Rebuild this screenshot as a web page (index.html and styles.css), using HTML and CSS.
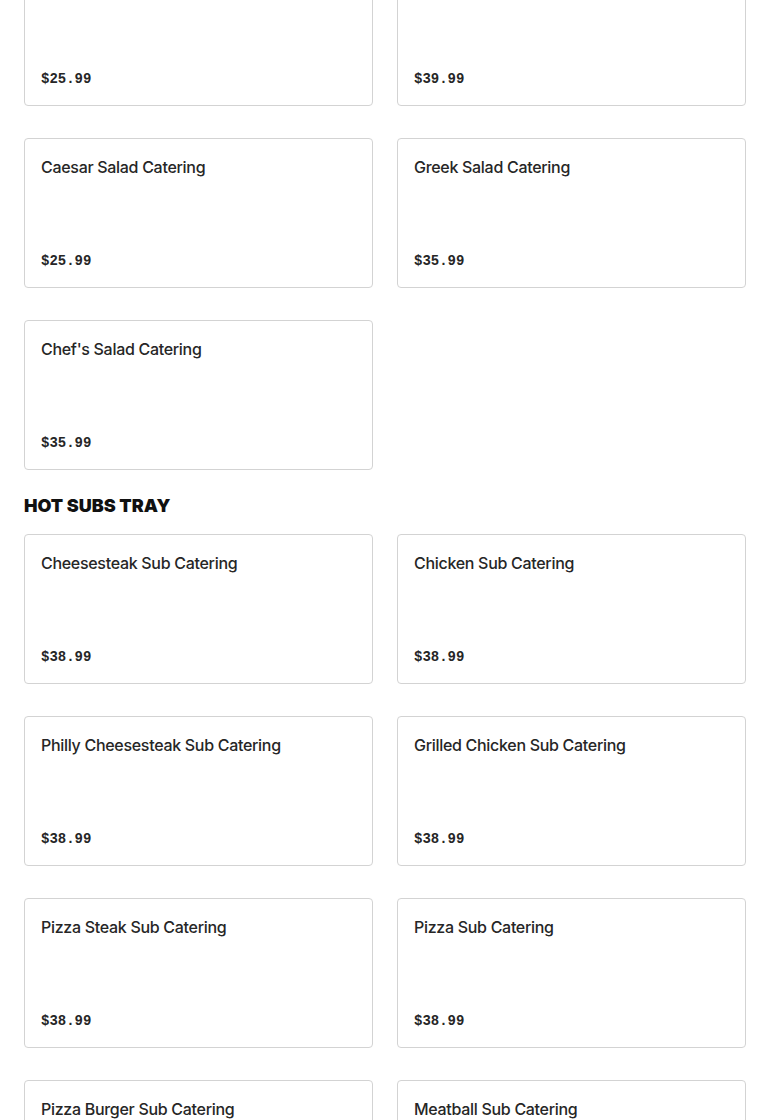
FILE: index.html
```html
<!DOCTYPE html>
<html>
  <head>
    <meta charset="utf-8">
    <meta name="viewport" content="width=device-width,initial-scale=1">
    <link rel="stylesheet" href="styles.css">
    <title>Catering Menu</title>
  </head>
  <body>
    <div id="menu">
      <section class="menu-section first-section">
        <div class="item-grid">
          <div class="item-card">
            <div class="item-name"></div>
            <div class="item-price">$25.99</div>
          </div>
          <div class="item-card">
            <div class="item-name"></div>
            <div class="item-price">$39.99</div>
          </div>
          <div class="item-card">
            <div class="item-name">Caesar Salad Catering</div>
            <div class="item-price">$25.99</div>
          </div>
          <div class="item-card">
            <div class="item-name">Greek Salad Catering</div>
            <div class="item-price">$35.99</div>
          </div>
          <div class="item-card">
            <div class="item-name">Chef's Salad Catering</div>
            <div class="item-price">$35.99</div>
          </div>
        </div>
      </section>

      <section class="menu-section">
        <h2 class="section-title">HOT SUBS TRAY</h2>
        <div class="item-grid">
          <div class="item-card">
            <div class="item-name">Cheesesteak Sub Catering</div>
            <div class="item-price">$38.99</div>
          </div>
          <div class="item-card">
            <div class="item-name">Chicken Sub Catering</div>
            <div class="item-price">$38.99</div>
          </div>
          <div class="item-card">
            <div class="item-name">Philly Cheesesteak Sub Catering</div>
            <div class="item-price">$38.99</div>
          </div>
          <div class="item-card">
            <div class="item-name">Grilled Chicken Sub Catering</div>
            <div class="item-price">$38.99</div>
          </div>
          <div class="item-card">
            <div class="item-name">Pizza Steak Sub Catering</div>
            <div class="item-price">$38.99</div>
          </div>
          <div class="item-card">
            <div class="item-name">Pizza Sub Catering</div>
            <div class="item-price">$38.99</div>
          </div>
          <div class="item-card">
            <div class="item-name">Pizza Burger Sub Catering</div>
            <div class="item-price">$38.99</div>
          </div>
          <div class="item-card">
            <div class="item-name">Meatball Sub Catering</div>
            <div class="item-price">$38.99</div>
          </div>
        </div>
      </section>
    </div>
  </body>
</html>
```
FILE: styles.css
```css
* {
  box-sizing: border-box;
}
body {
  margin: 0;
  font-family: Inter, "Noto Sans", sans-serif;
  color: #262626;
  background-color: #fff;
}
#menu {
  padding: 0 24px;
}
.first-section {
  margin-top: -44px;
}
.section-title {
  margin: 24px 0 16px;
  font-size: 18px;
  line-height: 24px;
  font-weight: 900;
  color: #111;
}
.item-grid {
  display: grid;
  grid-template-columns: 1fr 1fr;
  column-gap: 24px;
  row-gap: 32px;
}
.item-card {
  display: flex;
  flex-direction: column;
  justify-content: space-between;
  height: 150px;
  padding: 16px;
  border: 1px solid #d3d3d3;
  border-radius: 4px;
  background-color: #fff;
}
.item-name {
  min-height: 24px;
  font-size: 16px;
  line-height: 24px;
  font-weight: 500;
  letter-spacing: -0.3px;
}
.item-price {
  font-family: "Liberation Mono", monospace;
  font-size: 14px;
  line-height: 20px;
  font-weight: 700;
}
```
